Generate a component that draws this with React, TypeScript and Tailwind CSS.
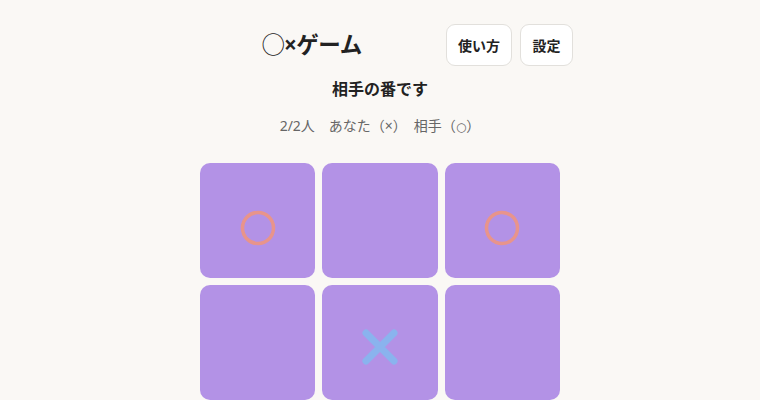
import React from "react";

type Mark = "o" | "x" | null;

const BOARD: Mark[] = ["o", null, "o", null, "x", null, null, null, null];

function O() {
  return (
    <svg width="40" height="40" viewBox="0 0 40 40" className="mt-[14px]">
      <circle cx="20" cy="20" r="15.5" fill="none" stroke="#e8948b" strokeWidth="3.5" />
    </svg>
  );
}

function X() {
  return (
    <svg width="40" height="40" viewBox="0 0 40 40" className="mt-[9px]">
      <path d="M6 6 L34 34 M34 6 L6 34" stroke="#8ab3ee" strokeWidth="7" strokeLinecap="round" />
    </svg>
  );
}

export default function App() {
  return (
    <div
      className="min-h-[400px] w-full bg-[#faf8f5] text-[#222]"
      style={{ fontFamily: '"Noto Sans", "Noto Sans CJK JP", sans-serif' }}
    >
      <div className="ml-[262px] flex w-[311px] items-center justify-between pt-[24px]">
        <h1 className="text-[22.5px] font-bold leading-none tracking-[-0.5px]">◯×ゲーム</h1>
        <div className="flex gap-[8px]">
          <button className="h-[42px] w-[66px] rounded-[9px] border border-[#e2e0dc] bg-white text-[14px] font-bold">
            使い方
          </button>
          <button className="h-[42px] w-[53px] rounded-[9px] border border-[#e2e0dc] bg-white text-[14px] font-bold">
            設定
          </button>
        </div>
      </div>

      <p className="mt-[11px] text-center text-[16px] font-bold leading-[24px]">相手の番です</p>
      <p className="mt-[15px] h-[20px] text-center text-[14px] leading-[20px] text-[#666]">
        2/2人　あなた（×）　相手（<span className="font-['DejaVu_Sans',sans-serif] text-[12px]">○</span>）
      </p>

      <div className="mx-auto mt-[27px] grid w-[360px] grid-cols-3 gap-[7px]">
        {BOARD.map((m, i) => (
          <div
            key={i}
            className="flex h-[115px] items-center justify-center rounded-[10px] bg-[#b392e6]"
          >
            {m === "o" && <O />}
            {m === "x" && <X />}
          </div>
        ))}
      </div>
    </div>
  );
}
